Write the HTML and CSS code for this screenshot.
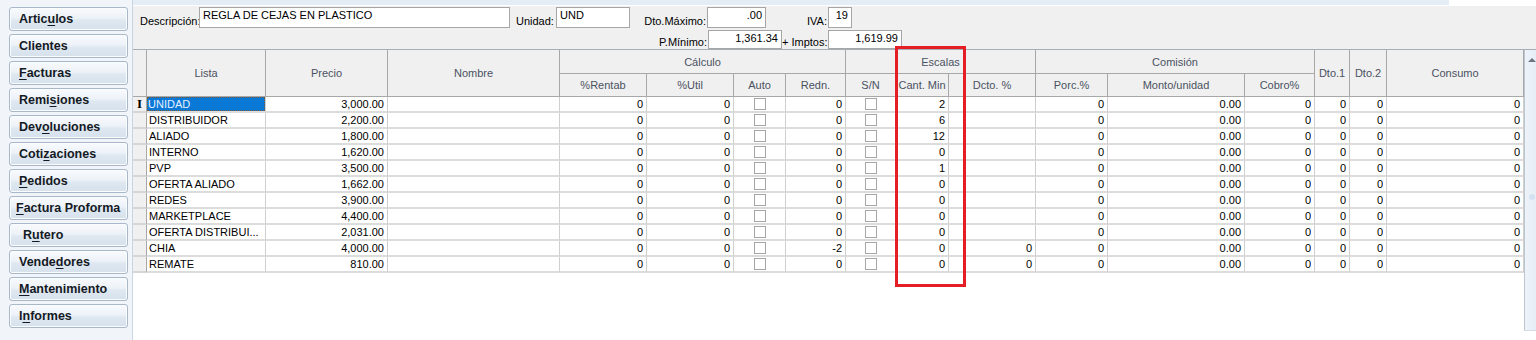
FILE: index.html
```html
<!DOCTYPE html>
<html>
<head>
  <meta charset="UTF-8">
  <title>Articulos - Precios</title>
  <link rel="stylesheet" href="styles.css">
</head>
<body>
  <div class="app">
    <aside class="sidebar">
      <button class="nav">Artic<u>u</u>los</button>
      <button class="nav">Clientes</button>
      <button class="nav"><u>F</u>acturas</button>
      <button class="nav">Remi<u>s</u>iones</button>
      <button class="nav">Dev<u>o</u>luciones</button>
      <button class="nav">Coti<u>z</u>aciones</button>
      <button class="nav"><u>P</u>edidos</button>
      <button class="nav nav-wide"><u>F</u>actura Proforma</button>
      <button class="nav nav-in">R<u>u</u>tero</button>
      <button class="nav">Vende<u>d</u>ores</button>
      <button class="nav"><u>M</u>antenimiento</button>
      <button class="nav">I<u>n</u>formes</button>
    </aside>

    <main class="main">
      <div class="topband"><div class="tabstrip"></div></div>

      <div class="form">
        <div class="form-row">
          <label class="lbl lbl-desc">Descripción:</label>
          <div class="box box-desc">REGLA DE CEJAS EN PLASTICO</div>
          <label class="lbl lbl-und">Unidad:</label>
          <div class="box box-und">UND</div>
          <label class="lbl lbl-dto">Dto.Máximo:</label>
          <div class="box box-dto num">.00</div>
          <label class="lbl lbl-iva">IVA:</label>
          <div class="box box-iva num">19</div>
        </div>
        <div class="form-row row2">
          <label class="lbl lbl-pmin">P.Mínimo:</label>
          <div class="box box-money num">1,361.34</div>
          <label class="lbl lbl-imp">+ Imptos:</label>
          <div class="box box-money num">1,619.99</div>
        </div>
      </div>

      <div class="grid-wrap">
        <table class="grid">
          <colgroup>
            <col style="width:14px"><col style="width:119px"><col style="width:122px"><col style="width:172px">
            <col style="width:87px"><col style="width:87px"><col style="width:52px"><col style="width:60px">
            <col style="width:50px"><col style="width:53px"><col style="width:87px">
            <col style="width:72px"><col style="width:137px"><col style="width:70px">
            <col style="width:35px"><col style="width:37px"><col style="width:137px">
          </colgroup>
          <thead>
            <tr class="h1">
              <th rowspan="2" class="ind"></th>
              <th rowspan="2">Lista</th>
              <th rowspan="2">Precio</th>
              <th rowspan="2">Nombre</th>
              <th colspan="4">Cálculo</th>
              <th colspan="3">Escalas</th>
              <th colspan="3">Comisión</th>
              <th rowspan="2">Dto.1</th>
              <th rowspan="2">Dto.2</th>
              <th rowspan="2">Consumo</th>
            </tr>
            <tr class="h2">
              <th>%Rentab</th><th>%Util</th><th>Auto</th><th>Redn.</th>
              <th>S/N</th><th>Cant. Min</th><th>Dcto. %</th>
              <th>Porc.%</th><th>Monto/unidad</th><th>Cobro%</th>
            </tr>
          </thead>
          <tbody>
            <tr><td class="ind cur">I</td><td class="sel"><span>UNIDAD</span></td><td class="n">3,000.00</td><td></td><td class="n">0</td><td class="n">0</td><td class="c"><i class="chk"></i></td><td class="n">0</td><td class="c"><i class="chk"></i></td><td class="n">2</td><td></td><td class="n">0</td><td class="n">0.00</td><td class="n">0</td><td class="n">0</td><td class="n">0</td><td class="n">0</td></tr>
            <tr><td class="ind"></td><td>DISTRIBUIDOR</td><td class="n">2,200.00</td><td></td><td class="n">0</td><td class="n">0</td><td class="c"><i class="chk"></i></td><td class="n">0</td><td class="c"><i class="chk"></i></td><td class="n">6</td><td></td><td class="n">0</td><td class="n">0.00</td><td class="n">0</td><td class="n">0</td><td class="n">0</td><td class="n">0</td></tr>
            <tr><td class="ind"></td><td>ALIADO</td><td class="n">1,800.00</td><td></td><td class="n">0</td><td class="n">0</td><td class="c"><i class="chk"></i></td><td class="n">0</td><td class="c"><i class="chk"></i></td><td class="n">12</td><td></td><td class="n">0</td><td class="n">0.00</td><td class="n">0</td><td class="n">0</td><td class="n">0</td><td class="n">0</td></tr>
            <tr><td class="ind"></td><td>INTERNO</td><td class="n">1,620.00</td><td></td><td class="n">0</td><td class="n">0</td><td class="c"><i class="chk"></i></td><td class="n">0</td><td class="c"><i class="chk"></i></td><td class="n">0</td><td></td><td class="n">0</td><td class="n">0.00</td><td class="n">0</td><td class="n">0</td><td class="n">0</td><td class="n">0</td></tr>
            <tr><td class="ind"></td><td>PVP</td><td class="n">3,500.00</td><td></td><td class="n">0</td><td class="n">0</td><td class="c"><i class="chk"></i></td><td class="n">0</td><td class="c"><i class="chk"></i></td><td class="n">1</td><td></td><td class="n">0</td><td class="n">0.00</td><td class="n">0</td><td class="n">0</td><td class="n">0</td><td class="n">0</td></tr>
            <tr><td class="ind"></td><td>OFERTA ALIADO</td><td class="n">1,662.00</td><td></td><td class="n">0</td><td class="n">0</td><td class="c"><i class="chk"></i></td><td class="n">0</td><td class="c"><i class="chk"></i></td><td class="n">0</td><td></td><td class="n">0</td><td class="n">0.00</td><td class="n">0</td><td class="n">0</td><td class="n">0</td><td class="n">0</td></tr>
            <tr><td class="ind"></td><td>REDES</td><td class="n">3,900.00</td><td></td><td class="n">0</td><td class="n">0</td><td class="c"><i class="chk"></i></td><td class="n">0</td><td class="c"><i class="chk"></i></td><td class="n">0</td><td></td><td class="n">0</td><td class="n">0.00</td><td class="n">0</td><td class="n">0</td><td class="n">0</td><td class="n">0</td></tr>
            <tr><td class="ind"></td><td>MARKETPLACE</td><td class="n">4,400.00</td><td></td><td class="n">0</td><td class="n">0</td><td class="c"><i class="chk"></i></td><td class="n">0</td><td class="c"><i class="chk"></i></td><td class="n">0</td><td></td><td class="n">0</td><td class="n">0.00</td><td class="n">0</td><td class="n">0</td><td class="n">0</td><td class="n">0</td></tr>
            <tr><td class="ind"></td><td>OFERTA DISTRIBUI...</td><td class="n">2,031.00</td><td></td><td class="n">0</td><td class="n">0</td><td class="c"><i class="chk"></i></td><td class="n">0</td><td class="c"><i class="chk"></i></td><td class="n">0</td><td></td><td class="n">0</td><td class="n">0.00</td><td class="n">0</td><td class="n">0</td><td class="n">0</td><td class="n">0</td></tr>
            <tr><td class="ind"></td><td>CHIA</td><td class="n">4,000.00</td><td></td><td class="n">0</td><td class="n">0</td><td class="c"><i class="chk"></i></td><td class="n">-2</td><td class="c"><i class="chk"></i></td><td class="n">0</td><td class="n">0</td><td class="n">0</td><td class="n">0.00</td><td class="n">0</td><td class="n">0</td><td class="n">0</td><td class="n">0</td></tr>
            <tr><td class="ind"></td><td>REMATE</td><td class="n">810.00</td><td></td><td class="n">0</td><td class="n">0</td><td class="c"><i class="chk"></i></td><td class="n">0</td><td class="c"><i class="chk"></i></td><td class="n">0</td><td class="n">0</td><td class="n">0</td><td class="n">0.00</td><td class="n">0</td><td class="n">0</td><td class="n">0</td><td class="n">0</td></tr>
          </tbody>
        </table>
        <div class="scrollbar">
          <span class="arrow"></span>
          <span class="thumb"></span>
        </div>
      </div>
    </main>

    <!-- marca roja sobre la columna Cant. Min -->
    <div class="mark"></div>
  </div>
</body>
</html>
```

FILE: styles.css
```css
body {
  margin: 0;
  font-family: "Liberation Sans", Arial, sans-serif;
  font-size: 11px;
  color: #000;
  background: #fff;
}
.app {
  position: relative;
  display: flex;
  width: 1536px;
  height: 340px;
  overflow: hidden;
}

/* menu lateral */
.sidebar {
  width: 133px;
  flex: none;
  background: #f1f5fa;
  border-right: 1px solid #c9d5e2;
  padding: 7px 0 0 9px;
  box-sizing: border-box;
  display: flex;
  flex-direction: column;
  gap: 3px;
}
.nav {
  width: 119px;
  height: 24px;
  padding: 0 0 0 9px;
  text-align: left;
  font: bold 12.5px "Liberation Sans", Arial, sans-serif;
  color: #141a24;
  background: linear-gradient(#f8fafd, #edf2f8 45%, #dfe8f1 55%, #d6e1ec);
  border: 1px solid #a9b8c9;
  border-radius: 3px;
  box-shadow: inset 0 0 0 1px #fbfcfe;
}
.nav u { text-decoration-thickness: 1px; text-underline-offset: 2px; }
.nav-wide { padding-left: 6px; }
.nav-in { padding-left: 13px; }

/* zona principal */
.main {
  flex: 1;
  display: flex;
  flex-direction: column;
  background: #fff;
}
.topband { height: 6px; background: #fff; }
.tabstrip { width: 1316px; height: 5px; background: #e4ecf6; }

.form {
  background: #f0f0f0;
  padding: 1px 0 0 7px;
  height: 43px;
  box-sizing: border-box;
}
.form-row { display: flex; align-items: flex-end; height: 21px; }
.form-row.row2 { margin-top: 2px; height: 19px; }
.lbl {
  line-height: 13px;
  white-space: nowrap;
  color: #000;
}
.lbl-desc { width: 59px; }
.lbl-und { width: 40px; margin-left: 6px; }
.lbl-dto { width: 77px; text-align: right; padding-right: 1px; box-sizing: border-box; }
.lbl-iva { width: 62px; text-align: right; padding-right: 1px; box-sizing: border-box; }
.lbl-pmin { width: 568px; text-align: right; padding-right: 1px; box-sizing: border-box; }
.lbl-imp { width: 46px; text-align: right; padding-right: 1px; box-sizing: border-box; }
.box {
  height: 100%;
  box-sizing: border-box;
  background: #fff;
  border: 1px solid #a6a6a6;
  padding: 1px 3px;
  line-height: 13px;
  white-space: nowrap;
}
.box.num { text-align: right; }
.box-desc { width: 311px; }
.box-und { width: 74px; }
.box-dto { width: 59px; }
.box-iva { width: 24px; }
.box-money { width: 74px; }

/* rejilla */
.grid-wrap {
  flex: 1;
  display: flex;
  align-items: flex-start;
  border-top: 1px solid #a6adb6;
}
.grid {
  table-layout: fixed;
  width: 1391px;
  border-collapse: separate;
  border-spacing: 0;
  font-size: 11px;
}
.grid th {
  background: #f0f0f0;
  color: #4a5262;
  font-weight: normal;
  padding: 0;
  border-right: 1px solid #a8a8a8;
  border-bottom: 1px solid #a8a8a8;
  white-space: nowrap;
  overflow: hidden;
}
.grid tr.h1 { height: 24px; }
.grid tr.h2 { height: 23px; }
.grid tbody tr { height: 16px; }
.grid td {
  padding: 0 2px;
  line-height: 14px;
  border-right: 1px solid #cfcfcf;
  border-bottom: 2px solid #dcdcdc;
  white-space: nowrap;
  overflow: hidden;
}
.grid td.n { text-align: right; padding-right: 3px; }
.grid td.c { text-align: center; padding: 0; }
.grid td.ind, .grid th.ind {
  background: #f0f0f0;
  border-right: 1px solid #a8a8a8;
  padding: 0;
}
.grid td.ind { border-bottom: 2px solid #d6d6d6; }
.grid td.cur {
  font: bold 13px "Liberation Serif", serif;
  text-align: center;
  line-height: 14px;
}
.grid td.sel { padding: 0; }
.grid td.sel span {
  display: block;
  height: 14px;
  padding: 0 1px;
  background: #0a78d7;
  color: #e8f2ff;
  outline: 1px dotted #7a5a30;
  outline-offset: -1px;
}
.chk {
  display: inline-block;
  width: 10px;
  height: 10px;
  border: 1px solid #a6a6a6;
  background: #fff;
  vertical-align: -2px;
}

.scrollbar {
  position: relative;
  width: 11px;
  height: 280px;
  border-left: 1px solid #bcc6d2;
  border-bottom: 1px solid #d4dbe4;
  background: linear-gradient(90deg, #eef3f9, #e6edf6);
}
.arrow {
  position: absolute;
  left: 3px;
  top: 8px;
  border-left: 4px solid transparent;
  border-right: 4px solid transparent;
  border-bottom: 4px solid #6d7480;
}
.thumb {
  position: absolute;
  left: 4px;
  top: 144px;
  width: 6px;
  height: 6px;
  border-radius: 50%;
  background: #d3e2f3;
}

.mark {
  position: absolute;
  left: 895px;
  top: 46px;
  width: 71px;
  height: 241px;
  border: 3px solid #e51d25;
  box-sizing: border-box;
  pointer-events: none;
}
```
